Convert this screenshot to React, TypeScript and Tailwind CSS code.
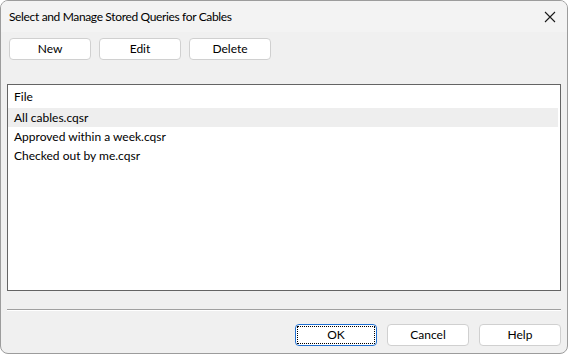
import React, { useState } from 'react';

const files = ['All cables.cqsr', 'Approved within a week.cqsr', 'Checked out by me.cqsr'];

function DlgButton({ label, focused = false }: { label: string; focused?: boolean }) {
  if (focused) {
    return <button className="w-[82px] h-[22px] rounded-[4px] border border-[#1f6fd1] bg-white p-[1px] text-[12px] text-black">
        <span className="flex h-full w-full items-center justify-center border border-dotted border-black">
          {label}
        </span>
      </button>;
  }
  return <button className="w-[82px] h-[22px] rounded-[4px] border border-[#d0d0d0] bg-white text-[12px] text-black">
      {label}
    </button>;
}

export default function App() {
  const [selected, setSelected] = useState(0);
  return <div className="w-[568px] h-[354px] bg-white" style={{ fontFamily: '"Segoe UI", Lato, "Noto Sans", sans-serif' }}>
      <div className="flex h-full w-full flex-col overflow-hidden rounded-[8px] border border-[#9c9c9c] bg-[#f0f0f0]">
        {/* title bar */}
        <div className="flex h-[31px] shrink-0 items-center justify-between bg-[#f3f3f3] pl-[8px] pr-[10px]">
          <span className="text-[12px] tracking-[-0.35px] text-black">Select and Manage Stored Queries for Cables</span>
          <svg width="12" height="12" viewBox="0 0 12 12" className="mr-[1px]">
            <path d="M1 1 L11 11 M11 1 L1 11" stroke="#1a1a1a" strokeWidth="1.1" fill="none" />
          </svg>
        </div>

        {/* toolbar */}
        <div className="mt-[6px] flex gap-[8px] pl-[8px]">
          <DlgButton label="New" />
          <DlgButton label="Edit" />
          <DlgButton label="Delete" />
        </div>

        {/* file list */}
        <div className="mx-[6px] mt-[24px] h-[207px] shrink-0 border border-[#646464] bg-white">
          <div className="flex h-[23px] items-center pl-[6px] text-[12px] text-black">File</div>
          {files.map((f, i) => <div key={f} onClick={() => setSelected(i)} className={`mr-[2px] flex h-[19px] items-center pl-[6px] text-[12px] text-black ${selected === i ? 'bg-[#eeeeee]' : ''}`}>
              {f}
            </div>)}
        </div>

        {/* separator */}
        <div className="mx-[6px] mt-[18px] h-px bg-[#a0a0a0]" />
        <div className="mx-[6px] h-px bg-white" />

        {/* dialog buttons */}
        <div className="mt-[13px] flex justify-end gap-[10px] pr-[6px]">
          <DlgButton label="OK" focused />
          <DlgButton label="Cancel" />
          <DlgButton label="Help" />
        </div>
      </div>
    </div>;
}
